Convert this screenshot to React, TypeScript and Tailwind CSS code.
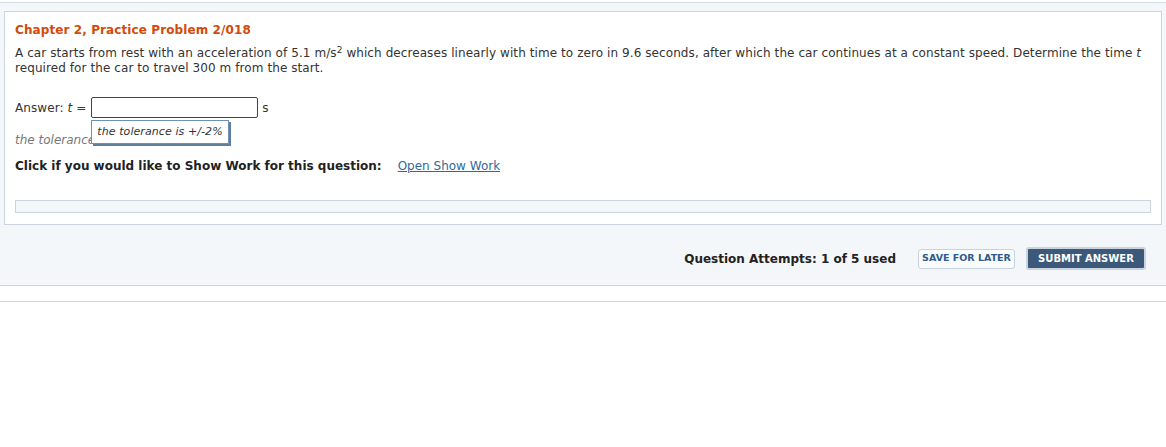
export default function App() {
  return (
    <div className="min-h-screen bg-white pt-[2px] font-['DejaVu_Sans',Verdana,sans-serif] text-[#333]">
      <div className="border-t border-[#d3dbe4] bg-[#f4f7fa]">
        <div className="px-[4px] pt-[8px]">
          <div className="border border-[#ccd5df] bg-white px-[10px] pt-[10px] pb-[11px]">
            <h2 className="text-[12px] font-bold leading-[16px] tracking-[0.1px] text-[#d14b0a]">
              Chapter 2, Practice Problem 2/018
            </h2>
            <p className="mt-[8px] text-[12px] leading-[15px] tracking-[0.08px]">
              A car starts from rest with an acceleration of 5.1 m/s
              <sup className="text-[9px]">2</sup> which decreases linearly with time to zero in 9.6
              seconds, after which the car continues at a constant speed. Determine the time{" "}
              <i>t</i> required for the car to travel 300 m from the start.
            </p>

            <div className="mt-[21px] flex items-center text-[12px] tracking-[0.08px]">
              <span>
                Answer: <i>t</i> =
              </span>
              <div className="relative ml-[5px]">
                <input
                  type="text"
                  className="block h-[21px] w-[167px] rounded-[2px] border border-[#444] bg-white"
                />
                <div className="absolute left-0 top-[23px] z-10 whitespace-nowrap border border-[#6f90b0] bg-white px-[5px] py-[3px] text-[11px] italic leading-[16px] text-[#333] shadow-[2px_2px_0_#5e7f9e]">
                  the tolerance is +/-2%
                </div>
              </div>
              <span className="ml-[4px]">s</span>
            </div>

            <p className="mt-[14px] text-[12px] italic leading-[16px] text-[#777]">
              the tolerance is +/-2%
            </p>

            <div className="mt-[10px] flex items-center text-[12px] leading-[16px]">
              <span className="font-bold text-[#222]">
                Click if you would like to Show Work for this question:
              </span>
              <a href="#" className="ml-[16px] text-[#2f6a9a] underline">
                Open Show Work
              </a>
            </div>

            <div className="mt-[26px] h-[13px] border border-[#ccd5df] bg-[#f4f7fa]" />
          </div>
        </div>

        <div className="flex items-center justify-end pr-[20px] pt-[22px] pb-[15px]">
          <span className="text-[12px] font-bold text-[#222]">Question Attempts: 1 of 5 used</span>
          <button className="ml-[22px] h-[20px] w-[97px] rounded-[3px] border border-[#c7d2de] bg-[#f9fbfd] text-[9.5px] font-bold text-[#2e5b8c]">
            SAVE FOR LATER
          </button>
          <button className="ml-[11px] h-[23px] w-[120px] rounded-[3px] border-2 border-[#c9d4e0] bg-[#3c5979] text-[10px] font-bold text-white">
            SUBMIT ANSWER
          </button>
        </div>
      </div>
      <div className="h-[16px] border-t border-[#cdd6e0]" />
      <div className="border-t border-[#cdd6e0]" />
    </div>
  );
}
